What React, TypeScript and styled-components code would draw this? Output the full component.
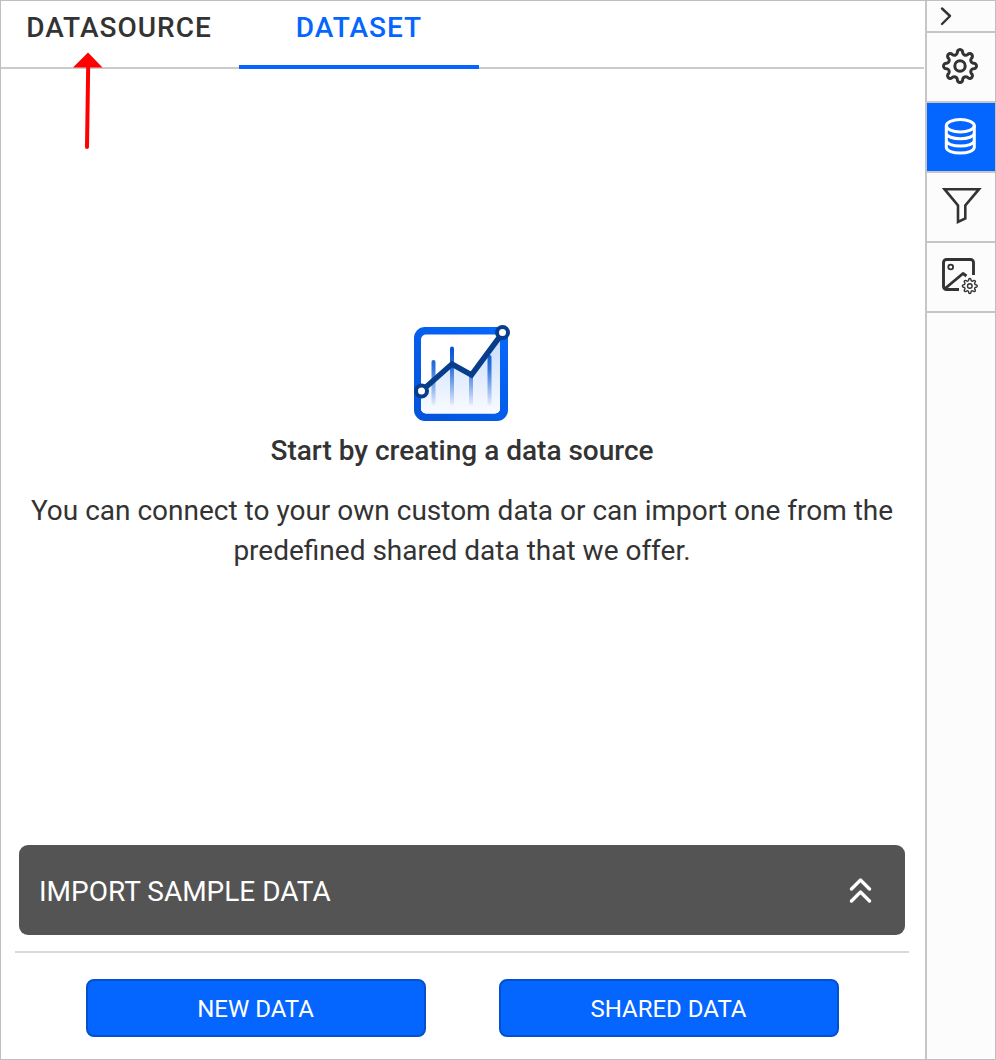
import React from "react";
import styled, { createGlobalStyle } from "styled-components";

const GlobalStyle = createGlobalStyle`
  *, *::before, *::after { box-sizing: border-box; }
  body { margin: 0; background: #fff; font-family: Roboto, sans-serif; color: #333; }
  button { font: inherit; }
`;

const Frame = styled.div`
  display: flex;
  width: 996px;
  height: 1060px;
  border: 1px solid #bfbfbf;
  overflow: hidden;
`;

const Panel = styled.main`
  position: relative;
  flex: 1;
  display: flex;
  flex-direction: column;
`;

const TabBar = styled.nav`
  display: flex;
  height: 68px;
  margin-right: 1px;
  box-shadow: inset 0 -2px #cbcbcb;
`;

const Tab = styled.button<{ $active?: boolean }>`
  width: ${(p) => (p.$active ? 240 : 238)}px;
  padding: ${(p) => (p.$active ? "0 0 11px" : "0 2px 11px 0")};
  border: 0;
  border-bottom: 4px solid ${(p) => (p.$active ? "#0565ff" : "transparent")};
  background: transparent;
  color: ${(p) => (p.$active ? "#0565ff" : "#333")};
  font-size: 28px;
  line-height: 53px;
  font-weight: 500;
  letter-spacing: 1px;
`;

const Pointer = styled.svg`
  position: absolute;
  left: 71px;
  top: 50px;
`;

const EmptyState = styled.section`
  flex: 1;
  display: flex;
  flex-direction: column;
  align-items: center;
  padding: 254px 2px 0 0;
  text-align: center;
`;

const Title = styled.h1`
  margin: 12px 0 0;
  font-size: 28px;
  line-height: 36px;
  font-weight: 500;
`;

const Description = styled.p`
  margin: 22px 0 0;
  font-size: 28px;
  line-height: 40px;
  white-space: nowrap;
`;

const ImportBar = styled.button`
  display: flex;
  align-items: center;
  justify-content: space-between;
  height: 90px;
  margin: 0 20px 0 18px;
  padding: 2px 33px 0 20px;
  border: 0;
  border-radius: 9px;
  background: #545454;
  color: #fff;
  font-size: 28px;
`;

const Footer = styled.footer`
  display: flex;
  justify-content: center;
  gap: 73px;
  height: 108px;
  margin: 16px 16px 0 14px;
  padding-top: 26px;
  border-top: 2px solid #d9d9d9;
`;

const ActionButton = styled.button`
  width: 340px;
  height: 58px;
  padding: 2px 0 0;
  border: 2px solid #0450cf;
  border-radius: 8px;
  background: #0565ff;
  color: #fff;
  font-size: 24px;
`;

const Sidebar = styled.aside`
  width: 70px;
  border-left: 2px solid #c6c6c6;
  background: #fcfcfc;
`;

const SideButton = styled.button<{ $active?: boolean; $height?: number }>`
  display: block;
  width: 68px;
  height: ${(p) => p.$height ?? 70}px;
  padding: 0;
  border: 0;
  border-bottom: 2px solid #c6c6c6;
  background: ${(p) => (p.$active ? "#0565ff" : "#fcfcfc")};
  color: ${(p) => (p.$active ? "#fff" : "#333")};

  svg {
    display: block;
    fill: none;
    stroke: currentColor;
    stroke-width: 3;
    stroke-linecap: round;
    stroke-linejoin: round;
  }
`;

/* Outline of an eight-toothed cog made of alternating arcs. */
function cogPath(cx: number, cy: number, scale: number) {
  const point = (i: number) => {
    const angle = ((i * 22.5 - 101.25) * Math.PI) / 180;
    const r = 13.8 * scale;
    return `${(cx + r * Math.cos(angle)).toFixed(2)} ${(cy + r * Math.sin(angle)).toFixed(2)}`;
  };
  let d = `M${point(0)}`;
  for (let i = 1; i <= 16; i++) {
    const tooth = i % 2 === 1;
    const r = (tooth ? 2.75 : 3.3) * scale;
    d += `A${r} ${r} 0 ${tooth ? "1 1" : "0 0"} ${point(i)}`;
  }
  return `${d}Z`;
}

const ChartLogo = () => (
  <svg width="98" height="98" viewBox="0 0 98 98" fill="none">
    <defs>
      <linearGradient id="frame" x1="85" y1="8" x2="15" y2="95" gradientUnits="userSpaceOnUse">
        <stop stopColor="#0667fb" />
        <stop offset="1" stopColor="#0455dc" />
      </linearGradient>
      <linearGradient id="area" x1="0" y1="10" x2="0" y2="91" gradientUnits="userSpaceOnUse">
        <stop stopColor="#c4dafb" />
        <stop offset="1" stopColor="#fafbff" />
      </linearGradient>
      <linearGradient id="bar" x1="0" y1="25" x2="0" y2="83" gradientUnits="userSpaceOnUse">
        <stop stopColor="#0455d5" />
        <stop offset=".35" stopColor="#2f73dd" />
        <stop offset="1" stopColor="#e8f0fd" />
      </linearGradient>
    </defs>
    <rect x="1" y="4" width="94" height="94" rx="11" fill="url(#frame)" />
    <rect x="8" y="11.5" width="79" height="79" rx="5" fill="#fff" />
    <path d="M8 69 39 41l19 11 29-41v74.500a5 5 0 0 1-5 5H13a5 5 0 0 1-5-5Z" fill="url(#area)" />
    <g fill="url(#bar)">
      <rect x="18.500" y="37" width="4" height="45" rx="2" />
      <rect x="37" y="23.500" width="4" height="58.500" rx="2" />
      <rect x="56" y="52" width="4" height="30" rx="2" />
      <rect x="74.500" y="32" width="4" height="50" rx="2" />
    </g>
    <path d="M8.500 68 39 41l19.500 11L89.500 10" stroke="#073e8c" strokeWidth="5.500" />
    <circle cx="8.500" cy="68" r="5.500" fill="#fff" stroke="#073e8c" strokeWidth="4" />
    <circle cx="89.500" cy="9.500" r="5.500" fill="#fff" stroke="#073e8c" strokeWidth="4" />
  </svg>
);

export default function App() {
  return (
    <>
      <GlobalStyle />
      <Frame>
        <Panel>
          <TabBar>
            <Tab>DATASOURCE</Tab>
            <Tab $active>DATASET</Tab>
          </TabBar>
          <Pointer width="32" height="100" viewBox="0 0 32 100">
            <path d="M16 1.500 30.500 16.500H1Z" fill="#f00" />
            <path d="M16.200 14 15 96" stroke="#f00" strokeWidth="4" strokeLinecap="round" />
          </Pointer>
          <EmptyState>
            <ChartLogo />
            <Title>Start by creating a data source</Title>
            <Description>
              You can connect to your own custom data or can import one from the
              <br />
              predefined shared data that we offer.
            </Description>
          </EmptyState>
          <ImportBar>
            IMPORT SAMPLE DATA
            <svg width="23" height="26" viewBox="0 0 23 26" fill="none" stroke="#fff" strokeWidth="3.300" strokeLinecap="round" strokeLinejoin="round">
              <path d="m2.500 11 9-9 9 9M2.500 23l9-9 9 9" />
            </svg>
          </ImportBar>
          <Footer>
            <ActionButton>NEW DATA</ActionButton>
            <ActionButton>SHARED DATA</ActionButton>
          </Footer>
        </Panel>
        <Sidebar>
          <SideButton $height={32} aria-label="Collapse">
            <svg width="68" height="30" viewBox="0 0 68 30">
              <path d="m15 7.500 8 7.500-8 8" strokeWidth="2.400" />
            </svg>
          </SideButton>
          <SideButton aria-label="Settings">
            <svg width="68" height="68" viewBox="0 0 68 68">
              <path d={cogPath(33, 33, 0.98)} />
              <circle cx="33" cy="33" r="5.200" />
            </svg>
          </SideButton>
          <SideButton $active aria-label="Data">
            <svg width="68" height="68" viewBox="0 0 68 68">
              <ellipse cx="33.300" cy="22.700" rx="14" ry="6.200" />
              <path d="M19.300 23v21.300c0 7.600 28 7.600 28 0V23M19.300 30c0 7.600 28 7.600 28 0M19.300 37.300c0 7.600 28 7.600 28 0" />
            </svg>
          </SideButton>
          <SideButton aria-label="Filter">
            <svg width="68" height="68" viewBox="0 0 68 68">
              <path d="M17.500 16.200h34.500L38.300 32.500v13L31 49V32.500Z" strokeWidth="2.600" strokeLinejoin="miter" />
            </svg>
          </SideButton>
          <SideButton aria-label="Image settings">
            <svg width="68" height="68" viewBox="0 0 68 68">
              <path d="M32 46.500H19.500a3 3 0 0 1-3-3v-24a3 3 0 0 1 3-3h24a3 3 0 0 1 3 3V32M17.500 46 36 30.500l3.500 2.500" strokeWidth="2.900" strokeLinecap="butt" />
              <circle cx="23.700" cy="24" r="2.400" strokeWidth="1.800" />
              <path d={cogPath(42.8, 43, 0.44)} strokeWidth="1.400" />
              <circle cx="42.800" cy="43" r="2.300" strokeWidth="1.400" />
            </svg>
          </SideButton>
        </Sidebar>
      </Frame>
    </>
  );
}
